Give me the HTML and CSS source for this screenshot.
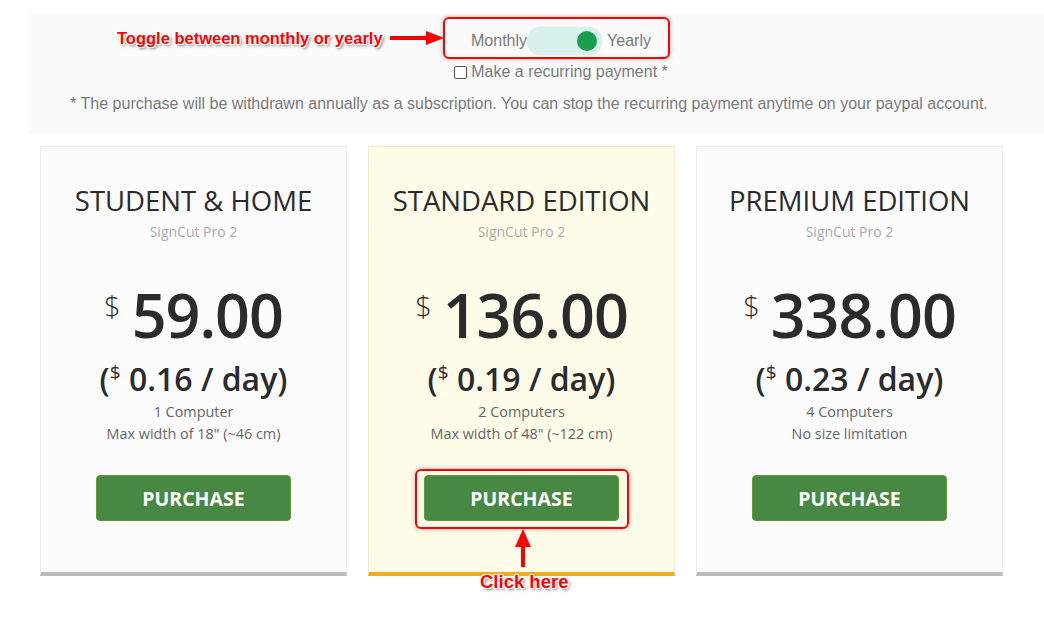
FILE: index.html
```html
<!DOCTYPE html>
<html>
<head>
<meta charset="utf-8">
<link rel="stylesheet" href="styles.css">
</head>
<body>
<div class="page">
  <section class="options">
    <div class="toggle-row">
      <span class="toggle-label">Monthly</span>
      <span class="switch"><span class="knob"></span></span>
      <span class="toggle-label">Yearly</span>
    </div>
    <label class="recurring"><span class="checkbox"></span>Make a recurring payment *</label>
    <p class="note">* The purchase will be withdrawn annually as a subscription. You can stop the recurring payment anytime on your paypal account.</p>

    <div class="mark mark-toggle"></div>
    <span class="callout callout-toggle">Toggle between monthly or yearly</span>
    <svg class="arrow arrow-right" width="54" height="14" viewBox="0 0 54 14">
      <rect x="0" y="5" width="38" height="4" fill="#f00"/>
      <polygon points="36,0 54,7 36,14" fill="#f00"/>
    </svg>
  </section>

  <div class="plans">
    <div class="plan">
      <h2 class="plan-title">STUDENT &amp; HOME</h2>
      <div class="plan-sub">SignCut Pro 2</div>
      <div class="price"><sup class="cur">$</sup>59.00</div>
      <div class="daily">(<sup>$</sup> 0.16 / day)</div>
      <div class="spec">1 Computer</div>
      <div class="spec">Max width of 18" (~46 cm)</div>
      <button class="buy">PURCHASE</button>
    </div>
    <div class="plan plan-featured">
      <h2 class="plan-title">STANDARD EDITION</h2>
      <div class="plan-sub">SignCut Pro 2</div>
      <div class="price"><sup class="cur">$</sup>136.00</div>
      <div class="daily">(<sup>$</sup> 0.19 / day)</div>
      <div class="spec">2 Computers</div>
      <div class="spec">Max width of 48" (~122 cm)</div>
      <button class="buy">PURCHASE</button>
      <div class="mark mark-buy"></div>
      <svg class="arrow arrow-up" width="16" height="38" viewBox="0 0 16 38">
        <polygon points="8,0 16,18 0,18" fill="#f00"/>
        <rect x="6" y="16" width="4" height="22" fill="#f00"/>
      </svg>
      <span class="callout callout-click">Click here</span>
    </div>
    <div class="plan">
      <h2 class="plan-title">PREMIUM EDITION</h2>
      <div class="plan-sub">SignCut Pro 2</div>
      <div class="price"><sup class="cur">$</sup>338.00</div>
      <div class="daily">(<sup>$</sup> 0.23 / day)</div>
      <div class="spec">4 Computers</div>
      <div class="spec">No size limitation</div>
      <button class="buy">PURCHASE</button>
    </div>
  </div>
</div>
</body>
</html>
```

FILE: styles.css
```css
* { box-sizing: border-box; }
html, body { margin: 0; padding: 0; background: #fff; }
body { font-family: "Open Sans", "Liberation Sans", sans-serif; color: #333; }

.page { width: 1044px; height: 618px; overflow: hidden; }

.options {
  position: relative;
  margin: 14px 0 0 29px;
  height: 120px;
  background: #fbfbfb;
  font-family: "Liberation Sans", Arial, sans-serif;
  color: #7a7a7a;
  font-size: 16px;
  display: flex;
  flex-direction: column;
  align-items: center;
  padding-top: 13px;
}

.toggle-row {
  display: flex;
  align-items: center;
  height: 28px;
  margin-left: 49px;
}
.toggle-label { line-height: 28px; }
.switch {
  width: 75px;
  height: 28px;
  border-radius: 14px;
  background: #d5f3eb;
  box-shadow: 0 0 2px rgba(0,0,0,.12);
  display: flex;
  align-items: center;
  justify-content: flex-end;
  padding-right: 5px;
  margin: 0 5px 0 0;
}
.knob {
  width: 20px;
  height: 20px;
  border-radius: 50%;
  background: #199e50;
}

.recurring {
  display: flex;
  align-items: center;
  margin: 7px 0 0 49px;
  line-height: 20px;
}
.checkbox {
  width: 13px;
  height: 13px;
  border: 1px solid #555;
  border-radius: 2px;
  background: #fff;
  margin-right: 4px;
}

.note {
  margin: 12px 15px 0 0;
  line-height: 20px;
}

.mark {
  position: absolute;
  border: 2px solid #f00;
  border-radius: 6px;
  box-shadow: 0 0 5px rgba(0,0,0,.3);
}
.mark-toggle { left: 414px; top: 3px; width: 227px; height: 42px; }

.callout {
  position: absolute;
  font-family: "Liberation Sans", Arial, sans-serif;
  font-weight: 700;
  color: #f00;
  white-space: nowrap;
  text-shadow:
    -1px -1px 0 #fff, 1px -1px 0 #fff, -1px 1px 0 #fff, 1px 1px 0 #fff,
    0 -1px 0 #fff, 0 1px 0 #fff, -1px 0 0 #fff, 1px 0 0 #fff,
    2px 2px 3px rgba(0,0,0,.55);
}
.callout-toggle { left: 88px; top: 13px; font-size: 16.5px; line-height: 22px; }
.arrow { position: absolute; }
.arrow-right { left: 361px; top: 17px; }

.plans {
  display: flex;
  gap: 21px;
  margin: 12px 0 0 40px;
}
.plan {
  position: relative;
  width: 307px;
  height: 430px;
  background: #fcfcfc;
  border: 1px solid #ececec;
  border-bottom: 4px solid #bcbcbc;
  display: flex;
  flex-direction: column;
  align-items: center;
  text-align: center;
  padding-top: 38px;
}
.plan-featured {
  background: #fffcea;
  border-color: #f3ebcb;
  border-bottom-color: #f0ab1f;
}
.plan-title {
  margin: 0;
  font-size: 27.5px;
  font-weight: 400;
  line-height: 32px;
  color: #2b2b2b;
}
.plan-sub {
  margin-top: 5px;
  font-size: 14px;
  line-height: 20px;
  color: #adadad;
}
.price {
  margin-top: 41px;
  font-size: 61px;
  font-weight: 600;
  line-height: 64px;
  color: #2b2b2b;
  letter-spacing: -1px;
}
.price .cur {
  font-size: 29px;
  font-weight: 300;
  vertical-align: top;
  position: relative;
  top: 8px;
  margin-right: 11px;
  line-height: 29px;
  letter-spacing: 0;
}
.daily {
  margin-top: 13px;
  font-size: 32px;
  font-weight: 600;
  line-height: 38px;
  color: #2b2b2b;
}
.daily sup {
  font-size: 19px;
  font-weight: 400;
  vertical-align: top;
  line-height: 19px;
  position: relative;
  top: 3px;
}
.spec {
  font-size: 14.4px;
  line-height: 22px;
  color: #666;
}
.daily + .spec { margin-top: 3px; }

.buy {
  margin-top: 30px;
  width: 195px;
  height: 46px;
  background: #478843;
  border: 1px solid #5c9a2c;
  border-radius: 4px;
  color: #fff;
  font-family: "Open Sans", "Liberation Sans", sans-serif;
  font-weight: 700;
  font-size: 19.5px;
  padding: 0;
}

.mark-buy { left: 46px; top: 322px; width: 214px; height: 60px; }
.arrow-up { left: 146px; top: 382px; }
.callout-click { left: 111px; top: 424px; font-size: 18.5px; line-height: 22px; }
```
